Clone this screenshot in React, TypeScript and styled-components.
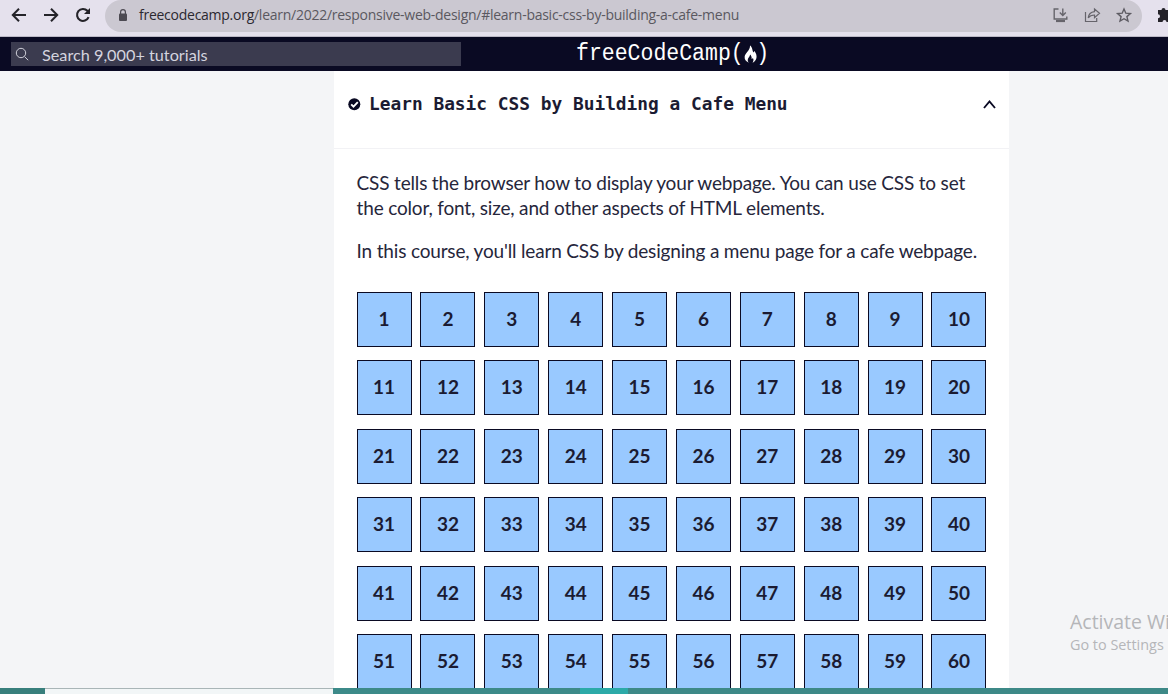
import React from "react";
import styled, { createGlobalStyle } from "styled-components";

const GlobalStyle = createGlobalStyle`
  * { box-sizing: border-box; }
  body { margin: 0; background: #f4f5f7; overflow: hidden; }
`;

const Window = styled.div`
  display: flex;
  flex-direction: column;
  width: 1168px;
  height: 694px;
  overflow: hidden;
  color: #1b1b32;
  font-family: Lato, sans-serif;
`;

const BrowserBar = styled.div`
  flex: none;
  display: flex;
  align-items: flex-start;
  height: 37px;
  background: #e5e1ed;
  border-bottom: 1px solid #bcb9c6;
`;

const NavButtons = styled.div`
  display: flex;
  gap: 12px;
  padding: 5px 12px 0 9px;
  width: 105px;
  flex: none;
`;

const Glyph = styled.svg<{ $size: number }>`
  display: block;
  flex: none;
  width: ${(p) => p.$size}px;
  height: ${(p) => p.$size}px;
`;

const AddressBar = styled.div`
  display: flex;
  align-items: center;
  width: 1037px;
  height: 32px;
  padding: 0 8px 2px 9px;
  border-radius: 16px;
  background: #cbc8d1;
  flex: none;
`;

const Url = styled.span`
  flex: 1;
  margin-left: 7px;
  color: #5a5860;
  font: 14px/20px "Open Sans", sans-serif;
  letter-spacing: -0.26px;
  white-space: nowrap;
`;

const Host = styled.span`
  color: #2b2930;
`;

const AddressActions = styled.div`
  display: flex;
  gap: 12px;
`;

const Extension = styled.div`
  padding: 6px 0 0 13px;
`;

const SiteHeader = styled.header`
  flex: none;
  display: flex;
  height: 34px;
  padding: 5px 0 0 11px;
  background: #0a0a23;
`;

const SearchBox = styled.div`
  display: flex;
  align-items: center;
  width: 450px;
  height: 24px;
  padding: 0 4px;
  background: #3b3b4f;
`;

const SearchText = styled.span`
  margin-left: 13px;
  padding-top: 1px;
  color: #d4d4df;
  font-size: 16.25px;
  line-height: 20px;
  white-space: nowrap;
`;

const Logo = styled.div`
  display: flex;
  align-items: center;
  height: 22px;
  margin-left: 115px;
  color: #fff;
  font: 21.5px/22px "Liberation Mono", monospace;
  transform: scaleY(1.1);
  white-space: pre;
`;

const Flame = styled(Glyph)`
  width: 13px;
  margin: 2px -0.5px 0 0;
`;

const Page = styled.main`
  flex: 1;
  min-height: 0;
  display: flex;
  padding-left: 334px;
  overflow: hidden;
  position: relative;
`;

const Course = styled.section`
  width: 675px;
  flex: none;
  background: #fff;
`;

const CourseHeader = styled.div`
  display: flex;
  align-items: flex-start;
  height: 78px;
  padding: 22px 12px 0 14px;
  border-bottom: 1px solid #f2f2f5;
`;

const CourseTitle = styled.h2`
  flex: 1;
  margin: 0 0 0 8px;
  font: bold 17.83px/22px "DejaVu Sans Mono", monospace;
  white-space: nowrap;
`;

const IconSlot = styled.div<{ $top: number }>`
  padding-top: ${(p) => p.$top}px;
`;

const CourseBody = styled.div`
  padding: 21px 22.6px 0;
`;

const Paragraph = styled.p`
  margin: 0 0 18px;
  color: #26263b;
  font-size: 19px;
  letter-spacing: -0.175px;
  line-height: 25px;
  white-space: nowrap;
`;

const StepGrid = styled.div`
  display: grid;
  grid-template-columns: repeat(10, 55px);
  grid-auto-rows: 55px;
  column-gap: 8.875px;
  row-gap: 13.4px;
  padding-top: 11px;
`;

const Step = styled.div`
  display: flex;
  align-items: center;
  justify-content: center;
  padding-bottom: 2px;
  border: 1px solid #0a0a23;
  background: #99c9ff;
  font-size: 19px;
  font-weight: 700;
`;

const Watermark = styled.div`
  position: absolute;
  left: 1070px;
  top: 538px;
  color: #b5b6b9;
  font: 14.4px/21px "Open Sans", sans-serif;
  white-space: nowrap;
`;

const WatermarkTitle = styled.div`
  font-size: 19.5px;
  line-height: 25px;
`;

const Taskbar = styled.div`
  flex: none;
  display: flex;
  height: 6px;
  background: #3d8987;
`;

const TaskSegment = styled.div<{ $width: number; $color: string; $line?: boolean }>`
  width: ${(p) => p.$width}px;
  background: ${(p) => p.$color};
  border-top: ${(p) => (p.$line ? "1px solid #a9b5b7" : "none")};
`;

const steps = Array.from({ length: 60 }, (_, i) => i + 1);

export default function App() {
  return (
    <Window>
      <GlobalStyle />
      <BrowserBar>
        <NavButtons>
          <Glyph $size={20} viewBox="0 0 20 20" fill="none" stroke="#242329" strokeWidth="2">
            <path d="M17 10H4M10 3.8 3.8 10l6.2 6.2" />
          </Glyph>
          <Glyph $size={20} viewBox="0 0 20 20" fill="none" stroke="#242329" strokeWidth="2">
            <path d="M3 10h13M10 3.8l6.2 6.2-6.2 6.2" />
          </Glyph>
          <Glyph $size={20} viewBox="0 0 20 20" fill="none" stroke="#242329" strokeWidth="2.1">
            <path d="M15.6 12.2A6 6 0 1 1 14.4 5.8L16 7.4" />
            <path d="M17 3v6h-6z" fill="#242329" stroke="none" />
          </Glyph>
        </NavButtons>
        <AddressBar>
          <Glyph $size={18} viewBox="0 0 18 18">
            <rect x="5" y="7.5" width="8" height="7.5" rx="1" fill="#4c4a52" />
            <path d="M6.6 8V6a2.4 2.4 0 0 1 4.8 0v2" fill="none" stroke="#4c4a52" strokeWidth="1.2" />
          </Glyph>
          <Url>
            <Host>freecodecamp.org</Host>/learn/2022/responsive-web-design/#learn-basic-css-by-building-a-cafe-menu
          </Url>
          <AddressActions>
            <Glyph $size={20} viewBox="0 0 20 20" fill="none" stroke="#66646b" strokeWidth="1.4">
              <path d="M8.5 4H4.2v10h12.6v-2.5M12.8 3.5v7M9.8 7.6l3 3 3-3" />
              <path d="M6 16h9" strokeWidth="2.2" />
            </Glyph>
            <Glyph $size={20} viewBox="0 0 20 20" fill="none" stroke="#66646b" strokeWidth="1.2">
              <path d="M3.5 7v9.5h11.2V13" />
              <path d="M12.5 4l5 4.3-5 4.3V10c-3 0-4.9.9-6.3 2.9.4-3.6 2.6-5.9 6.3-6.3z" />
            </Glyph>
            <Glyph $size={20} viewBox="0 0 20 20" fill="none" stroke="#5d5b62" strokeWidth="1.4">
              <path d="m10 4 1.8 4.2 4.6.4-3.5 3 1.1 4.5L10 13.7l-4 2.4 1.1-4.5-3.5-3 4.6-.4z" />
            </Glyph>
          </AddressActions>
        </AddressBar>
        <Extension>
          <Glyph $size={18} viewBox="0 0 18 18">
            <path
              fill="#242329"
              d="M3 4h3.5a2 2 0 1 1 4 0H15v4a2 2 0 1 1 0 4v4h-3.5a2 2 0 0 0-4 0H3v-3.7a2 2 0 0 0 0-4z"
            />
          </Glyph>
        </Extension>
      </BrowserBar>
      <SiteHeader>
        <SearchBox>
          <Glyph $size={14} viewBox="0 0 14 14" fill="none" stroke="#d0d0da" strokeWidth="1">
            <circle cx="6" cy="6" r="4.7" />
            <path d="m9.5 9.6 3.7 3.6" />
          </Glyph>
          <SearchText>Search 9,000+ tutorials</SearchText>
        </SearchBox>
        <Logo>
          <span>freeCodeCamp(</span>
          <Flame $size={16} viewBox="0 0 14 18" preserveAspectRatio="none" fill="#fff">
            <path d="M6.5 0c3 3 2.300 5.500 3.700 7.300.5-.3.700-1 .7-1.700C13 8 14 10.500 13.400 13c-.5 2.200-2 4-4.200 4.800 1.400-1.700 1.300-3.500.3-4.700-.3.700-.8 1-1.300 1 .3-2-.4-3.600-1.700-4.600.1 2.400-2.500 3.500-2.500 5.600 0 1 .4 2 1.200 2.700C2 16.600.3 14.200.7 11.500 1.300 7.800 6.700 5.500 6.500 0z" />
          </Flame>
          <span>)</span>
        </Logo>
      </SiteHeader>
      <Page>
        <Course>
          <CourseHeader>
            <IconSlot $top={5}>
              <Glyph $size={13} viewBox="0 0 13 13">
                <circle cx="6.3" cy="6.3" r="6" fill="#0a0a23" />
                <path d="m3.2 6.3 2.3 2.3 4.300-4.400" fill="none" stroke="#fff" strokeWidth="1.9" />
              </Glyph>
            </IconSlot>
            <CourseTitle>Learn Basic CSS by Building a Cafe Menu</CourseTitle>
            <IconSlot $top={4}>
              <Glyph $size={15} viewBox="0 0 15 15" fill="none" stroke="#0a0a23" strokeWidth="1.9">
                <path d="m2 11 5.500-6.500L13 11" />
              </Glyph>
            </IconSlot>
          </CourseHeader>
          <CourseBody>
            <Paragraph>
              CSS tells the browser how to display your webpage. You can use CSS to set
              <br />
              the color, font, size, and other aspects of HTML elements.
            </Paragraph>
            <Paragraph>
              In this course, you'll learn CSS by designing a menu page for a cafe webpage.
            </Paragraph>
            <StepGrid>
              {steps.map((n) => (
                <Step key={n}>{n}</Step>
              ))}
            </StepGrid>
          </CourseBody>
        </Course>
        <Watermark>
          <WatermarkTitle>Activate Windows</WatermarkTitle>
          Go to Settings
        </Watermark>
      </Page>
      <Taskbar>
        <TaskSegment $width={45} $color="#387f7c" />
        <TaskSegment $width={288} $color="#f2f6f7" $line />
        <TaskSegment $width={247} $color="#3c8a89" />
        <TaskSegment $width={48} $color="#2caaa8" />
      </Taskbar>
    </Window>
  );
}
